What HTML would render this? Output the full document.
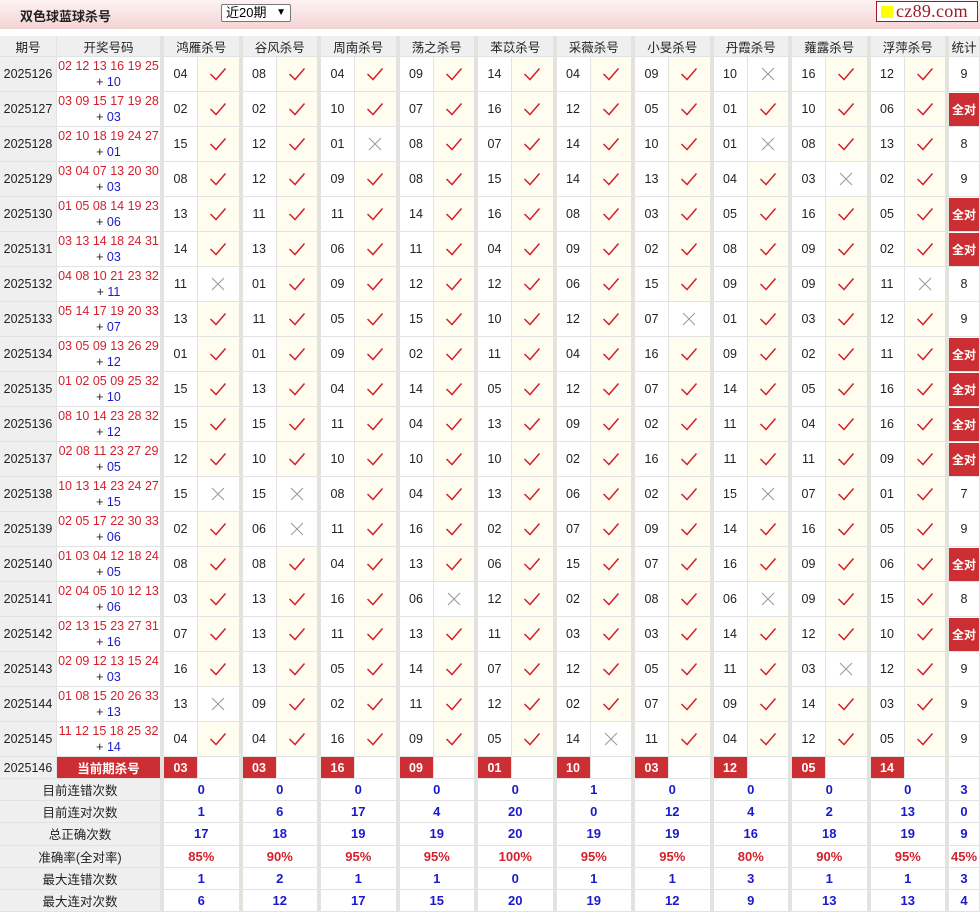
<!DOCTYPE html>
<html><head><meta charset="utf-8"><style>
body{margin:0;width:980px;height:912px;background:#fff;font-family:"Liberation Sans","Noto Sans CJK SC",sans-serif;overflow:hidden;position:relative}
.top{position:absolute;left:0;top:0;width:980px;height:29px;background:linear-gradient(#fdf3f3,#f4d3d3)}
.t{position:absolute;left:20px;top:6px;font-size:13px;font-weight:bold;color:#222}
.sel{position:absolute;left:221px;top:4px;width:70px;height:18px;border:1px solid #777;background:#fff;font-size:13px;box-sizing:border-box;padding-left:4px;line-height:16px;border-radius:2px}
.logo{position:absolute;left:876px;top:1px;width:102px;height:21px;border:1px solid #9b1c24;background:#fff;box-sizing:border-box}
.logo i{position:absolute;left:4px;top:4px;width:12px;height:12px;background:#ff0}
.logo span{position:absolute;left:19px;top:-1px;font-family:"Liberation Serif",serif;font-size:18px;color:#9b1c24;letter-spacing:0.3px;white-space:nowrap}
.c{position:absolute;box-sizing:border-box;text-align:center;font-size:12.5px;color:#222;border-bottom:1px solid #e2e2e2;border-right:1px solid #e2e2e2;display:flex;align-items:center;justify-content:center;white-space:nowrap}
.g{border-left:3px solid #e4e2dc}
.h{background:#efefef}
.ck{background:#fffdf0}
.red{color:#d4202c}
.blue{color:#1a1acc}
.cur{background:#cc2f33;color:#fff;font-weight:bold}
.st{font-weight:bold;font-size:13px}
</style></head><body>
<div class="top"><div class="t">双色球蓝球杀号</div><div class="sel">近20期 <span style="float:right;margin-right:4px;font-size:10px">&#9660;</span></div>
<div class="logo"><i></i><span>cz89.com</span></div></div>
<div id="tb"></div>
<script>
var names=["鸿雁杀号","谷风杀号","周南杀号","荡之杀号","苯苡杀号","采薇杀号","小旻杀号","丹霞杀号","蕹露杀号","浮萍杀号"];
var rows=[
["2025126","02 12 13 16 19 25","10","04 08 04 09 14 04 09 10 16 12",[7],"9"],
["2025127","03 09 15 17 19 28","03","02 02 10 07 16 12 05 01 10 06",[],"全对"],
["2025128","02 10 18 19 24 27","01","15 12 01 08 07 14 10 01 08 13",[2,7],"8"],
["2025129","03 04 07 13 20 30","03","08 12 09 08 15 14 13 04 03 02",[8],"9"],
["2025130","01 05 08 14 19 23","06","13 11 11 14 16 08 03 05 16 05",[],"全对"],
["2025131","03 13 14 18 24 31","03","14 13 06 11 04 09 02 08 09 02",[],"全对"],
["2025132","04 08 10 21 23 32","11","11 01 09 12 12 06 15 09 09 11",[0,9],"8"],
["2025133","05 14 17 19 20 33","07","13 11 05 15 10 12 07 01 03 12",[6],"9"],
["2025134","03 05 09 13 26 29","12","01 01 09 02 11 04 16 09 02 11",[],"全对"],
["2025135","01 02 05 09 25 32","10","15 13 04 14 05 12 07 14 05 16",[],"全对"],
["2025136","08 10 14 23 28 32","12","15 15 11 04 13 09 02 11 04 16",[],"全对"],
["2025137","02 08 11 23 27 29","05","12 10 10 10 10 02 16 11 11 09",[],"全对"],
["2025138","10 13 14 23 24 27","15","15 15 08 04 13 06 02 15 07 01",[0,1,7],"7"],
["2025139","02 05 17 22 30 33","06","02 06 11 16 02 07 09 14 16 05",[1],"9"],
["2025140","01 03 04 12 18 24","05","08 08 04 13 06 15 07 16 09 06",[],"全对"],
["2025141","02 04 05 10 12 13","06","03 13 16 06 12 02 08 06 09 15",[3,7],"8"],
["2025142","02 13 15 23 27 31","16","07 13 11 13 11 03 03 14 12 10",[],"全对"],
["2025143","02 09 12 13 15 24","03","16 13 05 14 07 12 05 11 03 12",[8],"9"],
["2025144","01 08 15 20 26 33","13","13 09 02 11 12 02 07 09 14 03",[0],"9"],
["2025145","11 12 15 18 25 32","14","04 04 16 09 05 14 11 04 12 05",[5],"9"]];
var cur="03 03 16 09 01 10 03 12 05 14".split(" ");
var stats=[["目前连错次数","0 0 0 0 0 1 0 0 0 0 3"],["目前连对次数","1 6 17 4 20 0 12 4 2 13 0"],["总正确次数","17 18 19 19 20 19 19 16 18 19 9"],["准确率(全对率)","85% 90% 95% 95% 100% 95% 95% 80% 90% 95% 45%"],["最大连错次数","1 2 1 1 0 1 1 3 1 1 3"],["最大连对次数","6 12 17 15 20 19 12 9 13 13 4"]];
var CK='<svg width="20" height="16" viewBox="0 0 20 16"><path d="M2.5 8 L8 13.5 L17.5 2.5" fill="none" stroke="#d4202c" stroke-width="1.5"/></svg>';
var X='<svg width="14" height="14" viewBox="0 0 14 14"><path d="M1 1L13 13M13 1L1 13" stroke="#999" stroke-width="1"/></svg>';
var h="";
function c(x,y,w,ht,cls,txt){h+='<div class="c '+cls+'" style="left:'+x+'px;top:'+y+'px;width:'+w+'px;height:'+ht+'px">'+txt+'</div>';}
function gx(g){return 161+g*78.5;}
var y=36;
c(0,y,57,21,"h","期号");c(57,y,104,21,"h","开奖号码");
for(var g=0;g<10;g++)c(gx(g),y,78.5,21,"h g",names[g]);
c(946,y,34,21,"h g","统计");
for(var i=0;i<rows.length;i++){var r=rows[i];y=57+i*35;
c(0,y,57,35,"h",r[0]);
c(57,y,104,35,"",'<div style="line-height:16px;font-size:12.5px;white-space:nowrap"><span class="red">'+r[1]+'</span><br>+ <span class="blue">'+r[2]+'</span></div>');
var n=r[3].split(" ");
for(var g=0;g<10;g++){var bad=r[4].indexOf(g)>=0;
c(gx(g),y,37,35,"g",n[g]);c(gx(g)+37,y,41.5,35,bad?"":"ck",bad?X:CK);}
if(r[5]=="全对")c(946,y,34,35,"g",'<div style="background:#cc2f33;color:#fff;font-weight:bold;font-size:12px;width:31px;height:33px;display:flex;align-items:center;justify-content:center">全对</div>');
else c(946,y,34,35,"g",r[5]);}
y=757;
c(0,y,57,22,"h","2025146");c(57,y,104,22,"cur","当前期杀号");
for(var g=0;g<10;g++){c(gx(g),y,37,22,"g cur",cur[g]);c(gx(g)+37,y,41.5,22,"","");}
c(946,y,34,22,"g","");
for(var k=0;k<6;k++){y=779+k*22.2;var v=stats[k][1].split(" ");
c(0,y,161,22.2,"h",stats[k][0]);
for(var g=0;g<10;g++)c(gx(g),y,78.5,22.2,"g st "+(k==3?"red":"blue"),v[g]);
c(946,y,34,22.2,"g st "+(k==3?"red":"blue"),v[10]);}
document.getElementById("tb").innerHTML=h;
</script>
</body></html>
